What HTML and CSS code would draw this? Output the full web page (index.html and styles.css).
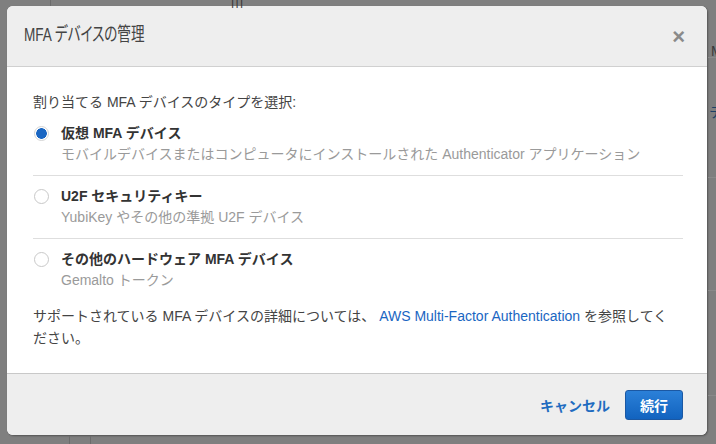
FILE: index.html
```html
<!DOCTYPE html>
<html lang="ja">
<head>
<meta charset="utf-8">
<title>MFA デバイスの管理</title>
<link rel="stylesheet" href="styles.css">
</head>
<body>
<div class="backdrop">
  <span class="bg-line bg-v1"></span>
  <span class="bg-mark">| | |</span>
  <span class="bg-line bg-h1"></span>
  <span class="bg-text bg-t1">M</span>
  <span class="bg-text bg-t2">テ</span>
  <span class="bg-line bg-h2"></span>
  <span class="bg-line bg-h3"></span>
  <span class="bg-line bg-h4"></span>
  <span class="bg-line bg-v2"></span>
  <span class="bg-line bg-v3"></span>

  <div class="modal">
    <div class="modal-header">
      <h1 class="modal-title">MFA デバイスの管理</h1>
      <span class="modal-close">×</span>
    </div>
    <div class="modal-body">
      <p class="intro">割り当てる MFA デバイスのタイプを選択:</p>
      <div class="option">
        <span class="radio radio-checked"></span>
        <div class="option-text">
          <div class="option-title">仮想 MFA デバイス</div>
          <div class="option-sub">モバイルデバイスまたはコンピュータにインストールされた Authenticator アプリケーション</div>
        </div>
      </div>
      <div class="option">
        <span class="radio"></span>
        <div class="option-text">
          <div class="option-title">U2F セキュリティキー</div>
          <div class="option-sub">YubiKey やその他の準拠 U2F デバイス</div>
        </div>
      </div>
      <div class="option option-last">
        <span class="radio"></span>
        <div class="option-text">
          <div class="option-title">その他のハードウェア MFA デバイス</div>
          <div class="option-sub">Gemalto トークン</div>
        </div>
      </div>
      <p class="note">サポートされている MFA デバイスの詳細については、 <a class="link" href="#">AWS Multi-Factor Authentication</a> を参照してください。</p>
    </div>
    <div class="modal-footer">
      <a class="cancel" href="#">キャンセル</a>
      <button class="primary" type="button">続行</button>
    </div>
  </div>
</div>
</body>
</html>
```
FILE: styles.css
```css
* { box-sizing: border-box; }
html, body { margin: 0; padding: 0; }
body {
  width: 716px;
  height: 444px;
  overflow: hidden;
  background: #7f7f7f;
  font-family: "Liberation Sans", "Noto Sans CJK JP", sans-serif;
  font-size: 14px;
  color: #444;
}
.backdrop {
  position: relative;
  width: 716px;
  height: 444px;
  padding: 6px 0 0 7px;
}
.bg-line { position: absolute; background: #6c6c6c; }
.bg-v1 { left: 50px; top: 0; width: 1px; height: 6px; }
.bg-v2 { left: 69px; top: 436px; width: 1px; height: 8px; }
.bg-v3 { left: 90px; top: 436px; width: 1px; height: 8px; }
.bg-h1 { left: 708px; top: 57px; width: 8px; height: 1px; background: #8a8a8a; }
.bg-h2 { left: 708px; top: 177px; width: 8px; height: 1px; background: #8a8a8a; }
.bg-h3 { left: 708px; top: 290px; width: 8px; height: 1px; background: #8a8a8a; }
.bg-h4 { left: 708px; top: 395px; width: 8px; height: 1px; background: #8a8a8a; }
.bg-mark {
  position: absolute; left: 231px; top: -6px;
  font-size: 12px; color: #333; letter-spacing: -1px;
}
.bg-text { position: absolute; font-size: 14px; color: #3a3a3a; }
.bg-t1 { left: 711px; top: 43px; }
.bg-t2 { left: 709px; top: 101px; color: #1d3f66; }

.modal {
  width: 700px;
  height: 429px;
  background: #fff;
  border-radius: 6px;
  box-shadow: 1px 1px 2px rgba(0,0,0,0.35);
  display: flex;
  flex-direction: column;
  overflow: hidden;
}
.modal-header {
  height: 61px;
  background: #eeeeee;
  border-bottom: 1px solid #d0d0d0;
  display: flex;
  align-items: center;
  justify-content: space-between;
  padding: 0 22px 0 17px;
}
.modal-title {
  margin: 0 0 3px;
  font-size: 19px;
  line-height: 24px;
  font-weight: normal;
  color: #444;
  font-feature-settings: "palt";
  transform: scaleX(0.715);
  transform-origin: left center;
  white-space: nowrap;
}
.modal-close {
  font-size: 22px;
  font-weight: bold;
  color: #8a8a8a;
  line-height: 1;
  padding-top: 2px;
}
.modal-body {
  flex: 1;
  padding: 25px 24px 0 26px;
}
.intro {
  margin: 0 0 1px;
  line-height: 20px;
  color: #444;
}
.option {
  display: flex;
  align-items: flex-start;
  padding: 10px 0 10px;
  border-bottom: 1px solid #dedede;
}
.option-last { border-bottom: none; }
.radio {
  flex: none;
  width: 15px;
  height: 15px;
  margin: 3px 12px 0 1px;
  border-radius: 50%;
  border: 1px solid #c8c8c8;
  background: #fff;
}
.radio-checked {
  border-color: #d4d4d4;
  background: radial-gradient(circle, #1a66c2 0, #1a66c2 5px, #fff 5.6px);
}
.option-title {
  font-weight: bold;
  color: #333;
  line-height: 21px;
}
.option-sub {
  color: #9a9a9a;
  line-height: 21px;
}
.note {
  margin: 4px 4px 0 0;
  line-height: 22px;
  color: #444;
}
.link { color: #1a66c2; text-decoration: none; }
.modal-footer {
  height: 62px;
  background: #eeeeee;
  border-top: 1px solid #c8c8c8;
  display: flex;
  align-items: center;
  justify-content: flex-end;
  padding: 0 24px 0 0;
  gap: 15px;
}
.cancel {
  color: #1f6cc0;
  font-weight: bold;
  text-decoration: none;
  font-size: 14px;
}
.primary {
  width: 58px;
  height: 30px;
  border: 1px solid #1b58a3;
  border-radius: 3px;
  background: linear-gradient(#2b80d8, #1263bf);
  color: #fff;
  font-family: "Liberation Sans", "Noto Sans CJK JP", sans-serif;
  font-size: 14px;
  font-weight: bold;
  padding: 0;
}
```
